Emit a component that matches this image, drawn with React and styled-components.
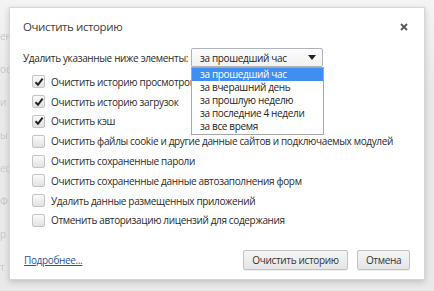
import React from "react";
import styled, { createGlobalStyle } from "styled-components";

const Global = createGlobalStyle`
  html, body { margin: 0; padding: 0; }
  body {
    width: 434px; height: 291px; overflow: hidden;
    background: #ececec;
    font-family: "Open Sans", "Noto Sans", sans-serif;
  }
`;

const Page = styled.div`
  position: relative;
  width: 434px;
  height: 291px;
  overflow: hidden;
  background: linear-gradient(#f4f4f4, #e9e9e9 30%, #e9e9e9);
`;

const BackText = styled.div`
  display: flex;
  flex-direction: column;
  gap: 20px;
  padding: 30px 0 0 0;
  color: #c6c6c6;
  font-size: 10px;
  line-height: 13px;
  filter: blur(0.5px);
`;

const Dialog = styled.div`
  position: absolute;
  left: 9px;
  top: 7px;
  width: 416px;
  height: 273px;
  box-sizing: border-box;
  background: #fff;
  border: 1px solid #d6d6d6;
  box-shadow: 0 2px 6px rgba(0, 0, 0, 0.18);
  display: flex;
  flex-direction: column;
  padding: 0 14px 0 13px;
  color: #2b2b2b;
  font-size: 10px;
  letter-spacing: -0.35px;
  white-space: nowrap;
`;

const Header = styled.div`
  display: flex;
  align-items: center;
  justify-content: space-between;
  height: 36px;
`;

const Title = styled.div`
  font-size: 11.5px;
  letter-spacing: -0.4px;
  color: #404040;
`;

const Close = styled.svg`
  margin-right: 2px;
  margin-top: 1px;
`;

const RangeRow = styled.div`
  display: flex;
  align-items: center;
  gap: 3px;
  margin-top: 4px;
  height: 19px;
  position: relative;
`;

const SelectWrap = styled.div`
  position: relative;
`;

const Select = styled.div`
  width: 132px;
  height: 19px;
  box-sizing: border-box;
  border: 1px solid #aeb3b9;
  border-radius: 2px;
  background: linear-gradient(#fdfdfd, #f1f1f1);
  display: flex;
  align-items: center;
  justify-content: space-between;
  padding: 0 6px 0 8px;
  color: #1e1e1e;
`;

const Arrow = styled.span`
  width: 0;
  height: 0;
  border-left: 4px solid transparent;
  border-right: 4px solid transparent;
  border-top: 5px solid #222;
`;

const DropList = styled.div`
  position: absolute;
  left: 0;
  top: 19px;
  width: 133px;
  box-sizing: border-box;
  background: #fff;
  border: 1px solid #a8a8a8;
  z-index: 2;
  padding-bottom: 1px;
`;

const DropItem = styled.div`
  height: 13px;
  line-height: 13px;
  padding-left: 8px;
  background: ${(p) => (p.$active ? "#3f8ef2" : "transparent")};
  color: ${(p) => (p.$active ? "#fff" : "#1e1e1e")};
`;

const List = styled.div`
  display: flex;
  flex-direction: column;
  margin-top: 5px;
  padding-left: 9px;
`;

const Row = styled.div`
  display: flex;
  align-items: center;
  height: 19.8px;
  gap: 6px;
`;

const Box = styled.span`
  width: 11px;
  height: 11px;
  border: 1px solid #c4c4c4;
  border-radius: 2px;
  background: linear-gradient(#fafafa, #e2e2e2);
  display: inline-flex;
  align-items: center;
  justify-content: center;
  flex: none;
`;

const Footer = styled.div`
  margin-top: auto;
  margin-bottom: 9px;
  display: flex;
  align-items: center;
  gap: 9px;
`;

const Link = styled.a`
  color: #2a55a3;
  text-decoration: underline;
  margin-right: auto;
  margin-left: 1px;
`;

const Button = styled.div`
  width: ${(p) => p.$w}px;
  height: 20px;
  box-sizing: border-box;
  border: 1px solid #c2c2c2;
  border-radius: 2px;
  background: linear-gradient(#f6f6f6, #e4e4e4);
  color: #333;
  display: flex;
  align-items: center;
  justify-content: center;
  box-shadow: 0 1px 0 rgba(0, 0, 0, 0.06);
`;

const Check = () => (
  <svg width="10" height="10" viewBox="0 0 10 10">
    <path d="M1.5 5.2 L4 7.8 L8.6 1.6" fill="none" stroke="#222" strokeWidth="2" />
  </svg>
);

const items = [
  ["Очистить историю просмотров", true],
  ["Очистить историю загрузок", true],
  ["Очистить кэш", true],
  ["Очистить файлы cookie и другие данные сайтов и подключаемых модулей", false],
  ["Очистить сохраненные пароли", false],
  ["Очистить сохраненные данные автозаполнения форм", false],
  ["Удалить данные размещенных приложений", false],
  ["Отменить авторизацию лицензий для содержания", false],
];

const options = [
  "за прошедший час",
  "за вчерашний день",
  "за прошлую неделю",
  "за последние 4 недели",
  "за все время",
];

const ghost = ["ен", "ос", "и", "ы", "ес", "Ф", "р", "т"];

export default function App() {
  return (
    <Page>
      <Global />
      <BackText>
        {ghost.map((g, i) => (
          <span key={i}>{g}</span>
        ))}
      </BackText>
      <Dialog>
        <Header>
          <Title>Очистить историю</Title>
          <Close width="8" height="8" viewBox="0 0 8 8">
            <path d="M1 1 L7 7 M7 1 L1 7" stroke="#555" strokeWidth="1.8" />
          </Close>
        </Header>
        <RangeRow>
          <span>Удалить указанные ниже элементы:</span>
          <SelectWrap>
            <Select>
              <span>за прошедший час</span>
              <Arrow />
            </Select>
            <DropList>
              {options.map((o, i) => (
                <DropItem key={o} $active={i === 0}>{o}</DropItem>
              ))}
            </DropList>
          </SelectWrap>
        </RangeRow>
        <List>
          {items.map(([t, c]) => (
            <Row key={t}>
              <Box>{c && <Check />}</Box>
              <span>{t}</span>
            </Row>
          ))}
        </List>
        <Footer>
          <Link>Подробнее...</Link>
          <Button $w={105}>Очистить историю</Button>
          <Button $w={53}>Отмена</Button>
        </Footer>
      </Dialog>
    </Page>
  );
}
